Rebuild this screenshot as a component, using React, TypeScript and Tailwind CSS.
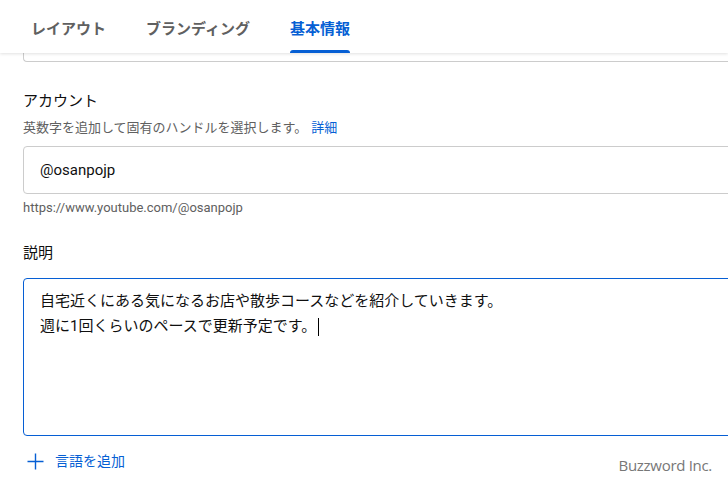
import React from "react";

export default function App() {
  const font = { fontFamily: 'Roboto, "Noto Sans CJK JP", sans-serif' };
  return (
    <div
      className="relative w-[728px] h-[484px] overflow-hidden bg-white"
      style={font}
    >
      {/* header tabs */}
      <div className="relative z-10 h-[53px] bg-white flex items-stretch pl-[31px] gap-[40px] shadow-[0_1px_3px_rgba(0,0,0,0.12)]">
        <div className="flex items-center text-[15px] font-bold text-[#606060] pt-[5px]">
          レイアウト
        </div>
        <div className="flex items-center text-[15px] font-bold text-[#606060] pt-[5px]">
          ブランディング
        </div>
        <div className="relative flex items-center text-[15px] font-bold text-[#065fd4] pt-[5px]">
          基本情報
          <span className="absolute left-0 right-0 bottom-0 h-[3px] rounded-t-sm bg-[#065fd4]" />
        </div>
      </div>

      {/* previous card fragment */}
      <div className="ml-[23px] w-[760px] h-[9px] border-b border-l border-[#cccccc] rounded-bl-[4px]" />

      <div className="pl-[23px] w-[783px]">
        <div className="mt-[27px] text-[15px] leading-[24px] text-[#0f0f0f]">
          アカウント
        </div>
        <div className="mt-[6px] text-[13px] leading-[18px] text-[#606060]">
          英数字を追加して固有のハンドルを選択します。
          <span className="ml-[4px] text-[#065fd4]">詳細</span>
        </div>
        <div className="mt-[9px] h-[48px] border border-[#cccccc] rounded-[4px] flex items-center pl-[16px] text-[15px] text-[#0f0f0f]">
          @osanpojp
        </div>
        <div className="mt-[6px] text-[13px] leading-[16px] text-[#606060]">
          https://www.youtube.com/@osanpojp
        </div>

        <div className="mt-[25px] text-[15px] leading-[24px] text-[#0f0f0f]">
          説明
        </div>
        <div className="mt-[13px] h-[158px] border border-[#065fd4] rounded-[4px] pl-[16px] pt-[10px] text-[15px] leading-[25px] text-[#0f0f0f]">
          <div>自宅近くにある気になるお店や散歩コースなどを紹介していきます。</div>
          <div className="flex items-center">
            <span>週に1回くらいのペースで更新予定です。</span>
            <span className="ml-[2px] inline-block w-px h-[18px] bg-black" />
          </div>
        </div>

        <div className="mt-[13px] h-[24px] flex items-center gap-[11px] pl-[4px] text-[14px] text-[#065fd4]">
          <svg width="17" height="17" viewBox="0 0 17 17" fill="none">
            <path d="M8.5 0.5V16.5M0.5 8.5H16.5" stroke="#065fd4" strokeWidth="1.4" />
          </svg>
          <span>言語を追加</span>
        </div>
      </div>

      <div
        className="absolute right-[16px] top-[454px] text-[15px] leading-[22px] text-[#777777]"
        style={{ fontFamily: '"Open Sans", sans-serif', letterSpacing: "-0.3px" }}
      >
        Buzzword Inc.
      </div>
    </div>
  );
}
